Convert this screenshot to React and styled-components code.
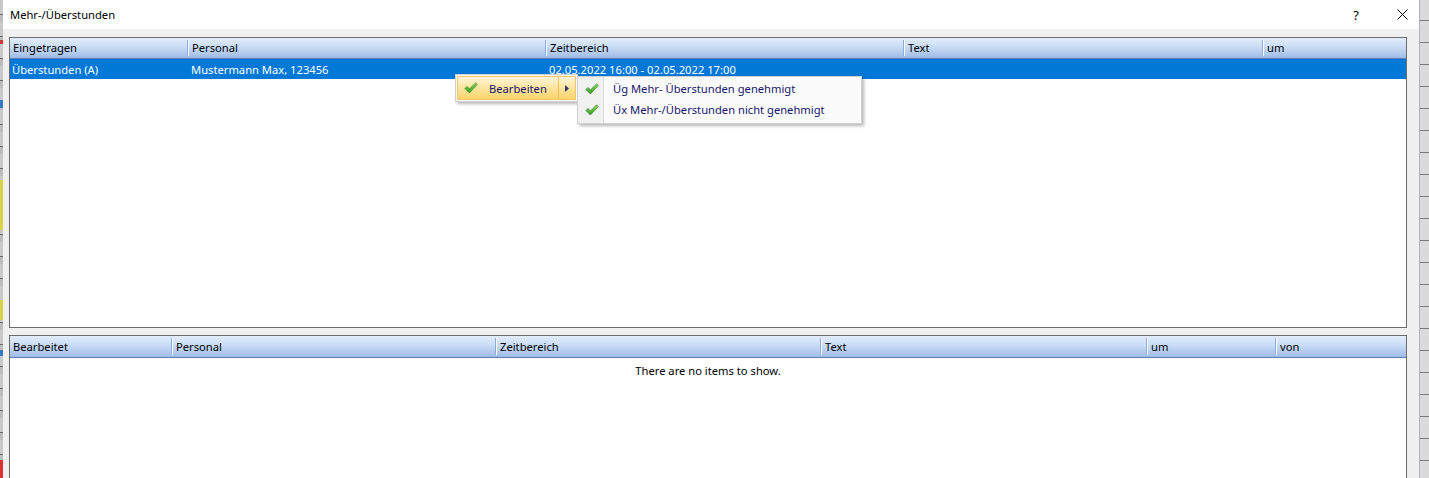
import React from "react"
import styled, { createGlobalStyle } from "styled-components"

const GlobalStyle = createGlobalStyle`
    html, body {
        margin: 0;
        padding: 0;
        background: #f0f0f0;
        overflow: hidden;
    }
    body {
        font-family: "Noto Sans", "Open Sans", sans-serif;
        font-size: 11.2px;
        color: #000;
    }
`

const Screen = styled.div`
    display: flex;
    width: 1429px;
    height: 478px;
    overflow: hidden;
`

const BackStrip = styled.div`
    width: 3px;
    flex-shrink: 0;
    background:
        linear-gradient(180deg,
            transparent 0 40px, #d33 40px 44px, transparent 44px 100px,
            #3a78c8 100px 108px, transparent 108px 180px,
            #dcd24a 180px 230px, transparent 230px 300px,
            #dcd24a 300px 320px, transparent 320px 350px,
            #3a78c8 350px 356px, transparent 356px 460px,
            #d33 460px 478px),
        repeating-linear-gradient(180deg, #c9c9c9 0 14px, #6a6a6a 14px 15px, #bdbdbd 15px 22px);
`

const RightStrip = styled.div`
    width: 9px;
    flex-shrink: 0;
    background:
        repeating-linear-gradient(180deg, transparent 0 20px, #7a7a7a 20px 21px, transparent 21px 22px),
        #dadada;
    border-left: 1px solid #a8b4c2;
`

const Window = styled.div`
    flex: 1;
    display: flex;
    flex-direction: column;
    position: relative;
    background: #f0f0f0;
`

const TitleBar = styled.div`
    height: 29px;
    flex-shrink: 0;
    background: #fff;
    display: flex;
    align-items: center;
    gap: 12px;
    padding-left: 7px;
`

const Title = styled.div`
    flex: 1;
    font-size: 11.2px;
    padding-bottom: 1px;
`

const CaptionButton = styled.div`
    width: 34px;
    height: 29px;
    display: flex;
    align-items: center;
    justify-content: center;
    font-size: 13px;
`

const Client = styled.div`
    flex: 1;
    display: flex;
    flex-direction: column;
    gap: 7px;
    padding: 8px 12px 0 6px;
`

const ListBox = styled.div`
    border: 1px solid #6b6b6b;
    ${p => p.$open ? "border-bottom: none;" : ""}
    background: #fff;
    height: ${p => p.$height}px;
    display: flex;
    flex-direction: column;
    flex-shrink: 0;
`

const HeaderRow = styled.div`
    display: grid;
    grid-template-columns: ${p => p.$cols};
    height: ${p => p.$h}px;
    background: linear-gradient(180deg, #e2edfc 0%, #c9dcf6 45%, #9fbbe8 100%);
    border-bottom: 1px solid #5b7db8;
    box-sizing: border-box;
`

const HeaderCell = styled.div`
    display: flex;
    align-items: center;
    padding-left: 3px;
    padding-bottom: 1px;
    border-left: ${p => p.$first ? "none" : "1px solid #ffffff"};
    box-shadow: ${p => p.$first ? "none" : "-1px 0 0 #8eaad6"};
    margin: ${p => p.$first ? "0" : "2px 0"};
    white-space: nowrap;
`

const DataRow = styled.div`
    display: grid;
    grid-template-columns: ${p => p.$cols};
    height: 20px;
    background: ${p => p.$selected ? "#0078d7" : "transparent"};
    color: ${p => p.$selected ? "#fff" : "#000"};
`

const DataCell = styled.div`
    display: flex;
    align-items: center;
    padding-left: ${p => p.$first ? "2px" : "3px"};
    white-space: nowrap;
    overflow: hidden;
`

const EmptyText = styled.div`
    text-align: center;
    padding-top: 5px;
    color: #000;
`

const Menu = styled.div`
    position: absolute;
    background: #fcfcfc;
    border: 1px solid #d0d0d0;
    box-shadow: 2px 2px 3px rgba(0, 0, 0, 0.28);
    padding: 1px;
`

const MainMenu = styled(Menu)`
    left: 452px;
    top: 74px;
    width: 119px;
`

const SubMenu = styled(Menu)`
    left: 574px;
    top: 76px;
    width: 281px;
    padding: 1px 1px 3px 1px;
    background: linear-gradient(90deg, #f1f1f1 0 25px, #d9d9d9 25px 26px, #fbfbfb 26px);
`

const HotItem = styled.div`
    display: flex;
    align-items: center;
    height: 22px;
    border: 1px solid #f2c66a;
    background: linear-gradient(180deg, #fff6d8 0%, #fde6a4 45%, #fbd46a 100%);
    color: #16166b;
`

const ItemIcon = styled.div`
    width: 25px;
    display: flex;
    align-items: center;
    justify-content: center;
    flex-shrink: 0;
`

const ItemLabel = styled.div`
    flex: 1;
    padding-left: ${p => p.$pad}px;
    white-space: nowrap;
`

const ArrowPart = styled.div`
    width: 16px;
    height: 100%;
    border-left: 1px solid #f0c060;
    display: flex;
    align-items: center;
    justify-content: center;
`

const MenuItem = styled.div`
    display: flex;
    align-items: center;
    height: 21px;
    color: #16166b;
`

function Check() {
    return (
        <svg width="14" height="12" viewBox="0 0 14 12">
            <defs>
                <linearGradient id="chk" x1="0" y1="0" x2="0" y2="1">
                    <stop offset="0" stopColor="#8ee06a" />
                    <stop offset="1" stopColor="#2f9a1c" />
                </linearGradient>
            </defs>
            <path d="M0.8 6.4 L3.2 4.4 L5.4 7 L11.6 0.8 L13.4 2.6 L5.4 11 Z"
                fill="url(#chk)" stroke="#2a7f18" strokeWidth="0.6" strokeLinejoin="round" />
        </svg>
    )
}

const topCols = "178px 358px 358px 359px 1fr"
const bottomCols = "162px 324px 325px 326px 129px 1fr"

function App() {
    const topHeaders = ["Eingetragen", "Personal", "Zeitbereich", "Text", "um"]
    const bottomHeaders = ["Bearbeitet", "Personal", "Zeitbereich", "Text", "um", "von"]
    const row = ["Überstunden (A)", "Mustermann Max, 123456", "02.05.2022 16:00 - 02.05.2022 17:00", "", ""]

    return (
        <Screen>
            <GlobalStyle />
            <BackStrip />
            <Window>
                <TitleBar>
                    <Title>Mehr-/Überstunden</Title>
                    <CaptionButton>?</CaptionButton>
                    <CaptionButton>
                        <svg width="11" height="11" viewBox="0 0 11 11">
                            <path d="M0.5 0.5 L10.5 10.5 M10.5 0.5 L0.5 10.5" stroke="#000" strokeWidth="1" />
                        </svg>
                    </CaptionButton>
                </TitleBar>
                <Client>
                    <ListBox $height={289}>
                        <HeaderRow $cols={topCols} $h={21}>
                            {topHeaders.map((h, i) => (
                                <HeaderCell key={h} $first={i === 0}>{h}</HeaderCell>
                            ))}
                        </HeaderRow>
                        <DataRow $cols={topCols} $selected>
                            {row.map((c, i) => (
                                <DataCell key={i} $first={i === 0}>{c}</DataCell>
                            ))}
                        </DataRow>
                    </ListBox>
                    <ListBox $height={150} $open>
                        <HeaderRow $cols={bottomCols} $h={22}>
                            {bottomHeaders.map((h, i) => (
                                <HeaderCell key={h + i} $first={i === 0}>{h}</HeaderCell>
                            ))}
                        </HeaderRow>
                        <EmptyText>There are no items to show.</EmptyText>
                    </ListBox>
                </Client>

                <MainMenu>
                    <HotItem>
                        <ItemIcon><Check /></ItemIcon>
                        <ItemLabel $pad={6}>Bearbeiten</ItemLabel>
                        <ArrowPart>
                            <svg width="4" height="7" viewBox="0 0 4 7">
                                <path d="M0 0 L4 3.5 L0 7 Z" fill="#2a3a6a" />
                            </svg>
                        </ArrowPart>
                    </HotItem>
                </MainMenu>
                <SubMenu>
                    <MenuItem>
                        <ItemIcon><Check /></ItemIcon>
                        <ItemLabel $pad={9}>Üg Mehr- Überstunden genehmigt</ItemLabel>
                    </MenuItem>
                    <MenuItem>
                        <ItemIcon><Check /></ItemIcon>
                        <ItemLabel $pad={9}>Üx Mehr-/Überstunden nicht genehmigt</ItemLabel>
                    </MenuItem>
                </SubMenu>
            </Window>
            <RightStrip />
        </Screen>
    )
}

export default App
